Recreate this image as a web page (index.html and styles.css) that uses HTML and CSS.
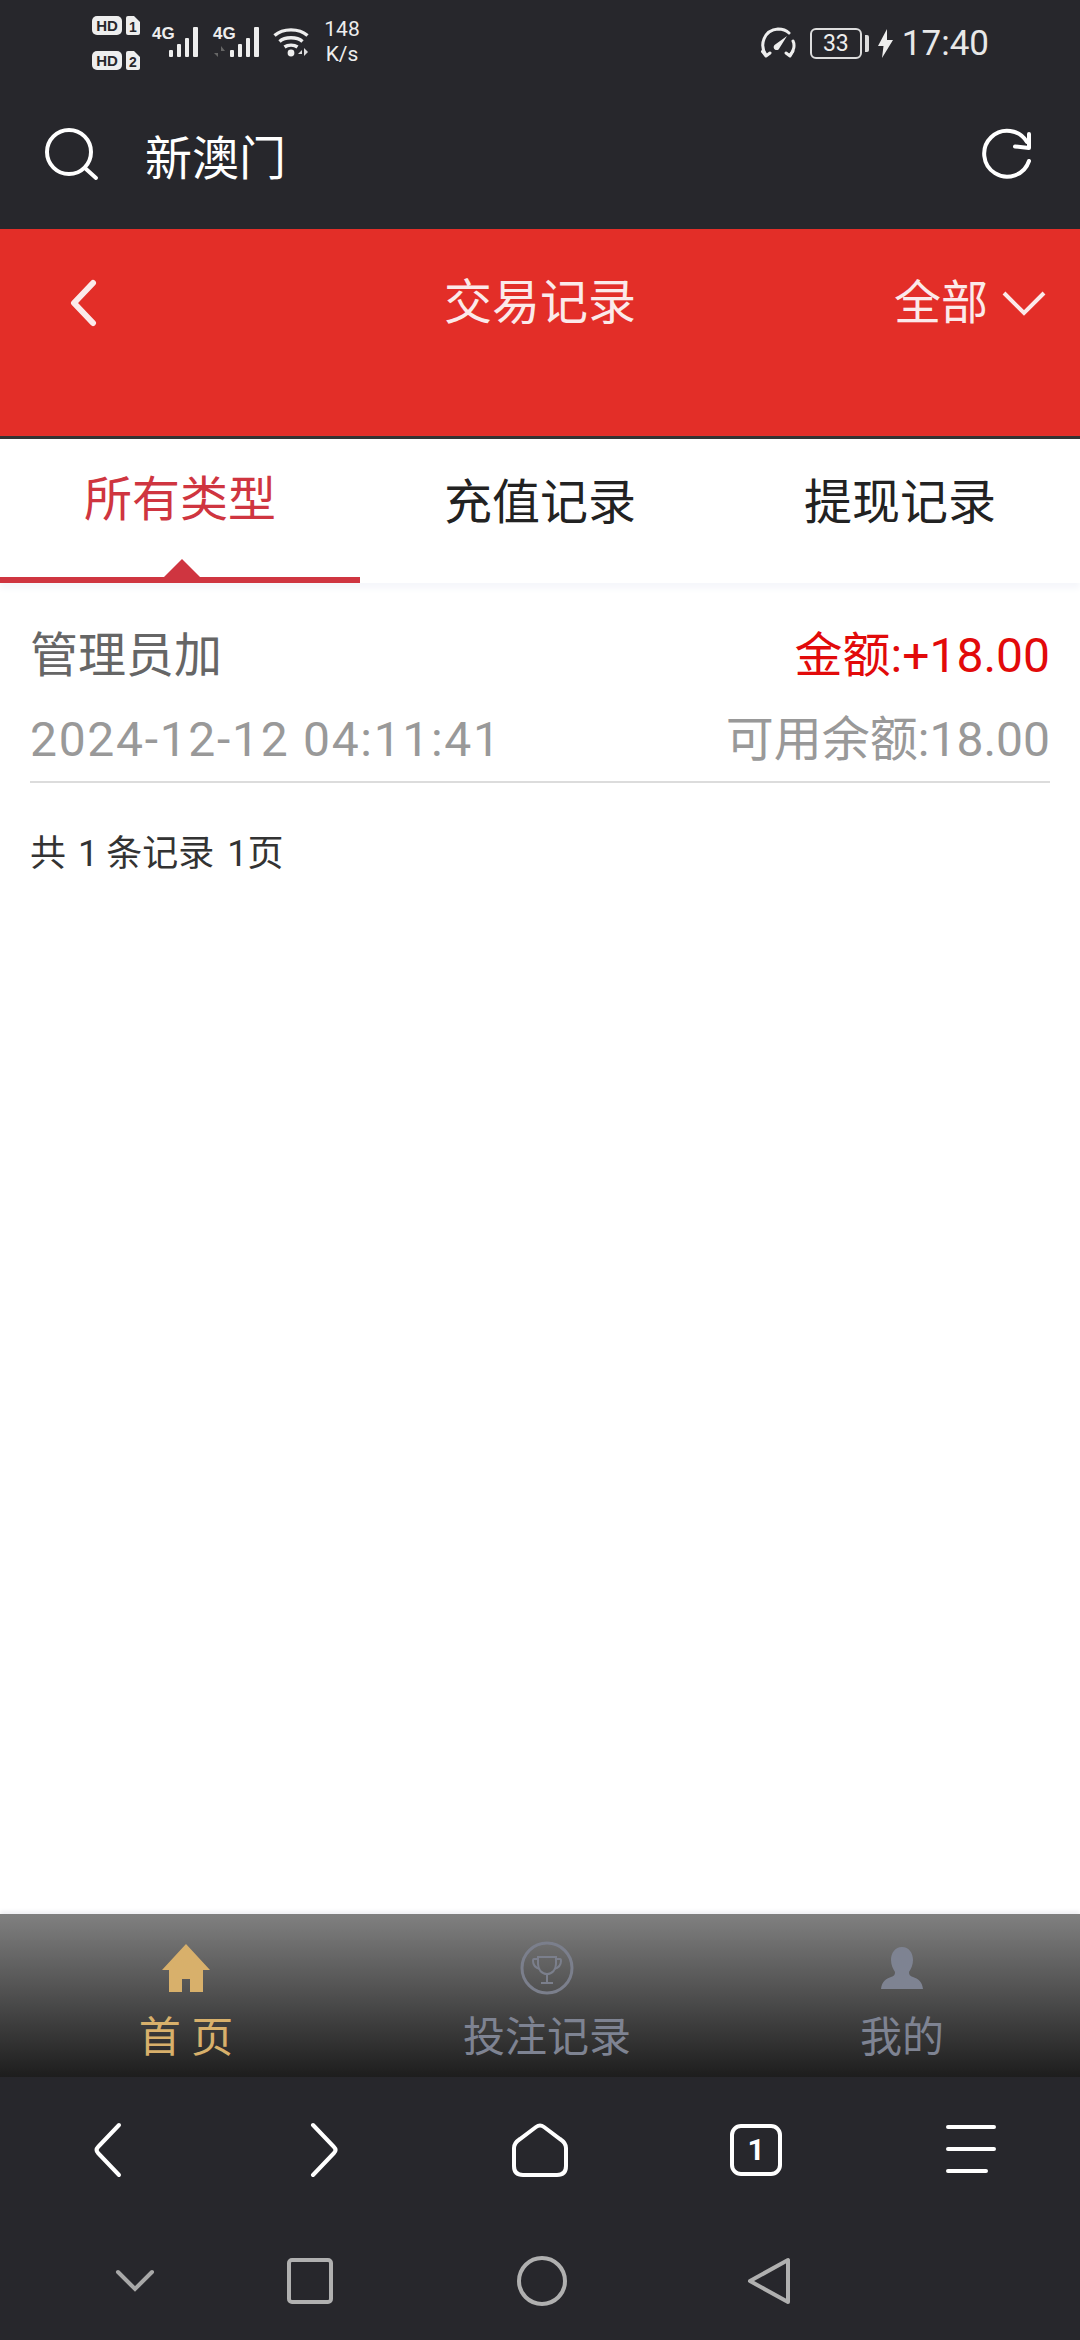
FILE: index.html
```html
<!DOCTYPE html>
<html lang="zh-CN">
<head>
   <meta charset="UTF-8" />
   <meta name="viewport" content="width=device-width, initial-scale=1.0"/>
   <title>交易记录</title>
   <link rel="stylesheet" href="styles.css">
</head>
<body>
<div class="page">

   <!-- phone status bar -->
   <div class="status">
      <div class="status-left">
         <svg class="sim" width="48" height="54" viewBox="0 0 48 54">
            <rect x="0" y="0" width="30" height="19" rx="5" fill="#eee"/>
            <text x="15" y="15" class="sim-txt">HD</text>
            <path d="M34 2a2 2 0 0 1 2-2h6l6 6v11a2 2 0 0 1-2 2H36a2 2 0 0 1-2-2z" fill="#eee"/>
            <text x="41" y="15.5" class="sim-txt sim-num">1</text>
            <rect x="0" y="35" width="30" height="19" rx="5" fill="#eee"/>
            <text x="15" y="50" class="sim-txt">HD</text>
            <path d="M34 37a2 2 0 0 1 2-2h6l6 6v11a2 2 0 0 1-2 2H36a2 2 0 0 1-2-2z" fill="#eee"/>
            <text x="41" y="50.5" class="sim-txt sim-num">2</text>
         </svg>
         <div class="signal">
            <span class="net-txt">4G</span>
            <svg width="50" height="32" viewBox="0 0 50 32">
               <g fill="#eee">
                  <rect x="17" y="24" width="4" height="7" rx="1"/>
                  <rect x="25" y="18" width="4" height="13" rx="1"/>
                  <rect x="33" y="12" width="4" height="19" rx="1"/>
                  <rect x="41" y="1" width="5" height="30" rx="1"/>
               </g>
            </svg>
         </div>
         <div class="signal signal2">
            <span class="net-txt">4G</span>
            <svg width="50" height="32" viewBox="0 0 50 32">
               <path d="M5 20v11l-4-4h4zM8 31V20l4 5H8z" fill="#666"/>
               <g fill="#eee">
                  <rect x="17" y="24" width="4" height="7" rx="1"/>
                  <rect x="25" y="18" width="4" height="13" rx="1"/>
                  <rect x="33" y="12" width="4" height="19" rx="1"/>
                  <rect x="41" y="1" width="5" height="30" rx="1"/>
               </g>
            </svg>
         </div>
         <svg class="wifi" width="38" height="32" viewBox="0 0 38 32">
            <g fill="none" stroke="#eee" stroke-width="3.4">
               <path d="M1.5 9.5C10 2 26 2 34.5 9.5"/>
               <path d="M6.5 15.5C12 10.5 24 10.5 29.5 15.5"/>
               <path d="M11.5 21C15 18.5 21 18.5 24.5 21"/>
            </g>
            <circle cx="18" cy="27" r="3.4" fill="#eee"/>
            <path d="M29 28l-4 0 4-4zM31 22v8l4-4z" fill="#ddd"/>
         </svg>
         <div class="speed"><span>148</span><span>K/s</span></div>
      </div>
      <div class="status-right">
         <svg width="36" height="32" viewBox="0 0 36 32">
            <g fill="none" stroke="#eee" stroke-width="3" stroke-linecap="round" stroke-linejoin="round">
               <path d="M6 28C-1 18 4 3 18 2c5 0 9 2 11 4"/>
               <path d="M30 28c4-4 5-10 3-14"/>
               <path d="M2.5 24.500L6 29l4-3"/>
               <path d="M26 26l4 3 3-5"/>
            </g>
            <path d="M27 9L19.500 21a3 3 0 1 1-5-3z" fill="#eee"/>
         </svg>
         <div class="battery"><span>33</span></div>
         <div class="battery-cap"></div>
         <svg width="15" height="29" viewBox="0 0 15 29">
            <path d="M9 0L0 17h5.500L4 29l11-18H9z" fill="#eee"/>
         </svg>
         <span class="time">17:40</span>
      </div>
   </div>

   <!-- browser address bar -->
   <div class="address">
      <svg class="search-icon" width="54" height="54" viewBox="0 0 54 54">
         <circle cx="24" cy="24" r="22" fill="none" stroke="#fff" stroke-width="4"/>
         <path d="M41 41l10 9" fill="none" stroke="#fff" stroke-width="4" stroke-linecap="round"/>
      </svg>
      <span class="address-txt">新澳门</span>
      <svg class="reload-icon" width="54" height="54" viewBox="0 0 54 54">
         <path d="M49 33A23 23 0 1 1 47 14" fill="none" stroke="#fff" stroke-width="4" stroke-linecap="round"/>
         <path d="M49 6v14l-14-1.500" fill="none" stroke="#fff" stroke-width="4" stroke-linecap="round" stroke-linejoin="round"/>
      </svg>
   </div>

   <!-- red page header -->
   <div class="header">
      <svg class="back" width="30" height="48" viewBox="0 0 30 48">
         <path d="M25 4L6 24l19 20" fill="none" stroke="#fbeaea" stroke-width="6" stroke-linecap="round" stroke-linejoin="round"/>
      </svg>
      <h1 class="title">交易记录</h1>
      <div class="filter">
         <span>全部</span>
         <svg width="44" height="28" viewBox="0 0 44 28">
            <path d="M2 4l20 20L42 4" fill="none" stroke="#fbeaea" stroke-width="4"/>
         </svg>
      </div>
   </div>

   <!-- record type tabs -->
   <div class="tabs">
      <div class="tab active">所有类型</div>
      <div class="tab">充值记录</div>
      <div class="tab">提现记录</div>
   </div>

   <div class="content">
      <div class="record">
         <div class="record-line">
            <span class="rec-name">管理员加</span>
            <span class="rec-amount">金额:+18.00</span>
         </div>
         <div class="record-line line2">
            <span class="rec-time">2024-12-12 04:11:41</span>
            <span class="rec-balance">可用余额:18.00</span>
         </div>
      </div>
      <p class="total">共<span class="count">1</span>条记录<span class="pages">1页</span></p>
   </div>

   <!-- site bottom menu -->
   <div class="menu">
      <div class="menu-item on">
         <svg width="50" height="50" viewBox="0 0 50 50">
            <path d="M25 1L49 27H42V49H29V36H21V49H8V27H1z" fill="#d8b06b"/>
         </svg>
         <span>首 页</span>
      </div>
      <div class="menu-item">
         <svg width="54" height="54" viewBox="0 0 54 54">
            <circle cx="27" cy="27" r="25" fill="none" stroke="#7b7f8c" stroke-width="3"/>
            <g fill="none" stroke="#7b7f8c" stroke-width="2">
               <path d="M18 16h18v7c0 6-4 10-9 10s-9-4-9-10z"/>
               <path d="M18 18h-4c-1 0-1 1-1 2 0 4 3 7 7 8"/>
               <path d="M36 18h4c1 0 1 1 1 2 0 4-3 7-7 8"/>
               <path d="M27 33v8M21 42h12"/>
            </g>
         </svg>
         <span>投注记录</span>
      </div>
      <div class="menu-item">
         <svg width="42" height="42" viewBox="0 0 42 42">
            <path d="M21 0c7 0 11 6 11 13 0 5-2 9-4 12 0 3 1 4 4 5 5 2 9 4 10 12H0c1-8 5-10 10-12 3-1 4-2 4-5-2-3-4-7-4-12C10 6 14 0 21 0z" fill="#7e8392"/>
         </svg>
         <span>我的</span>
      </div>
   </div>

   <!-- browser toolbar -->
   <div class="toolbar">
      <svg width="30" height="56" viewBox="0 0 30 56">
         <path d="M26 3L5 25q-3 3 0 6l21 22" fill="none" stroke="#fff" stroke-width="4" stroke-linecap="round"/>
      </svg>
      <svg width="30" height="56" viewBox="0 0 30 56">
         <path d="M4 3l21 22q3 3 0 6L4 53" fill="none" stroke="#fff" stroke-width="4" stroke-linecap="round"/>
      </svg>
      <svg width="56" height="56" viewBox="0 0 56 56">
         <path d="M24 5q4-3 8 0l16 12q6 4 6 9v18q0 9-9 9H11q-9 0-9-9V26q0-5 6-9z" fill="none" stroke="#fff" stroke-width="4"/>
      </svg>
      <div class="tab-count">1</div>
      <svg width="56" height="56" viewBox="0 0 56 56">
         <path d="M4 5h46M4 27h46M4 49h38" fill="none" stroke="#fff" stroke-width="4" stroke-linecap="round"/>
      </svg>
   </div>

   <!-- android nav -->
   <div class="sysnav">
      <svg class="nav-down" width="40" height="24" viewBox="0 0 40 24">
         <path d="M3 3l17 17L37 3" fill="none" stroke="#a8a8a8" stroke-width="4" stroke-linecap="round"/>
      </svg>
      <svg class="nav-square" width="46" height="46" viewBox="0 0 46 46">
         <rect x="2" y="2" width="42" height="42" rx="3" fill="none" stroke="#b0b0b0" stroke-width="4"/>
      </svg>
      <svg class="nav-circle" width="50" height="50" viewBox="0 0 50 50">
         <circle cx="25" cy="25" r="23" fill="none" stroke="#b0b0b0" stroke-width="4"/>
      </svg>
      <svg class="nav-back" width="44" height="50" viewBox="0 0 44 50">
         <path d="M41 4v42L3 25z" fill="none" stroke="#b0b0b0" stroke-width="4" stroke-linejoin="round"/>
      </svg>
   </div>

</div>
</body>
</html>
```

FILE: styles.css
```css
* {
   margin: 0;
   padding: 0;
   box-sizing: border-box;
}
body {
   background: #fff;
   font-family: Roboto, "Noto Sans CJK SC", sans-serif;
   overflow: hidden;
}
.page {
   width: 1080px;
   height: 2340px;
   display: flex;
   flex-direction: column;
}

/* status bar */
.status {
   height: 70px;
   background: #27272c;
   color: #eee;
   display: flex;
   justify-content: space-between;
   padding: 0 91px 0 92px;
}
.status-left, .status-right {
   display: flex;
   align-items: center;
}
.sim {
   margin-top: 16px;
   height: 54px;
}
.sim-txt {
   font: bold 15px "Liberation Sans", sans-serif;
   text-anchor: middle;
   fill: #27272c;
}
.sim-num {
   font-size: 14px;
}
.signal {
   width: 50px;
   height: 32px;
   margin: 14px 0 0 12px;
   position: relative;
}
.signal2 {
   margin-left: 11px;
}
.net-txt {
   position: absolute;
   left: 0;
   top: 0;
   font: bold 17px/16px "Liberation Sans", sans-serif;
   color: #eee;
}
.wifi {
   margin: 14px 0 0 10px;
}
.speed {
   display: flex;
   flex-direction: column;
   align-items: center;
   margin: 14px 0 0 10px;
   font-size: 21px;
   line-height: 25px;
   width: 42px;
}
.status-right {
   padding-top: 16px;
}
.battery {
   width: 52px;
   height: 31px;
   margin-left: 14px;
   border: 2px solid #ddd;
   border-radius: 6px;
   text-align: center;
   font-size: 23px;
   line-height: 27px;
}
.battery-cap {
   width: 4px;
   height: 17px;
   margin: 0 9px 0 3px;
   background: #ddd;
   border-radius: 0 2px 2px 0;
}
.time {
   margin-left: 9px;
   font-size: 35px;
   color: #e8e8e8;
}

/* address bar */
.address {
   height: 159px;
   background: #27272c;
   display: flex;
   align-items: center;
   padding: 10px 46px 0 45px;
   color: #fff;
}
.address-txt {
   margin-left: 46px;
   font-size: 47px;
   flex: 1;
}

/* header */
.header {
   height: 207px;
   background: #e32e28;
   color: #fbeaea;
   display: grid;
   grid-template-columns: 1fr auto 1fr;
   align-items: start;
   padding: 50px 34px 0;
}
.title {
   font-size: 48px;
   font-weight: 400;
   line-height: 48px;
}
.back {
   margin-left: 34px;
}
.filter {
   justify-self: end;
   display: flex;
   align-items: center;
   gap: 14px;
   font-size: 47px;
   line-height: 48px;
}

/* tabs */
.tabs {
   border-top: 3px solid #333;
   height: 147px;
   display: grid;
   grid-template-columns: repeat(3, 360px);
   box-shadow: 0 6px 6px #f6f7fb;
   position: relative;
}
.tab {
   text-align: center;
   font-size: 48px;
   line-height: 128px;
   color: #222;
}
.tab.active {
   color: #cf3540;
   line-height: 122px;
   border-bottom: 6px solid #cf3540;
   position: relative;
}
.tab.active::after {
   content: "";
   position: absolute;
   left: 164px;
   bottom: 0;
   border-left: 18px solid transparent;
   border-right: 18px solid transparent;
   border-bottom: 18px solid #cf3540;
}

/* record list */
.content {
   flex: 1;
   padding: 0 30px;
}
.record {
   border-bottom: 2px solid #dcdcdc;
   padding-top: 40px;
   height: 200px;
}
.record-line {
   display: flex;
   justify-content: space-between;
   font-size: 48px;
   line-height: 66px;
}
.line2 {
   margin-top: 18px;
}
.rec-name {
   color: #666;
}
.rec-amount {
   color: #e20a0a;
}
.rec-time {
   color: #999;
   letter-spacing: 1.7px;
}
.rec-balance {
   color: #999;
}
.total {
   margin-top: 46px;
   font-size: 36px;
   line-height: 50px;
   color: #333;
}
.count {
   margin: 0 8px 0 12px;
}
.pages {
   margin-left: 13px;
}

/* bottom menu */
.menu {
   height: 163px;
   background: linear-gradient(#808080, #1d1d1d);
   display: grid;
   grid-template-columns: 372px 350px 360px;
   box-shadow: 0 -3px 4px #f0f0f4;
}
.menu-item {
   display: flex;
   flex-direction: column;
   align-items: center;
   font-size: 42px;
   line-height: 60px;
   color: #7e8392;
   height: 163px;
}
.menu-item svg {
   margin-top: 24px;
   height: 60px;
}
.menu-item span {
   position: absolute;
   margin-top: 94px;
}
.menu-item.on {
   color: #d8b06b;
}

/* browser toolbar */
.toolbar {
   height: 146px;
   background: #27272c;
   display: grid;
   grid-template-columns: repeat(5, 216px);
   justify-items: center;
   align-items: center;
}
.tab-count {
   width: 52px;
   height: 52px;
   border: 4px solid #fff;
   border-radius: 11px;
   color: #fff;
   text-align: center;
   font-size: 30px;
   font-weight: 700;
   line-height: 44px;
}

/* system nav */
.sysnav {
   height: 117px;
   background: #27272c;
   display: flex;
   align-items: center;
   padding: 0 0 2px 115px;
}
.nav-square {
   margin-left: 132px;
}
.nav-circle {
   margin-left: 184px;
}
.nav-back {
   margin-left: 180px;
}
```
